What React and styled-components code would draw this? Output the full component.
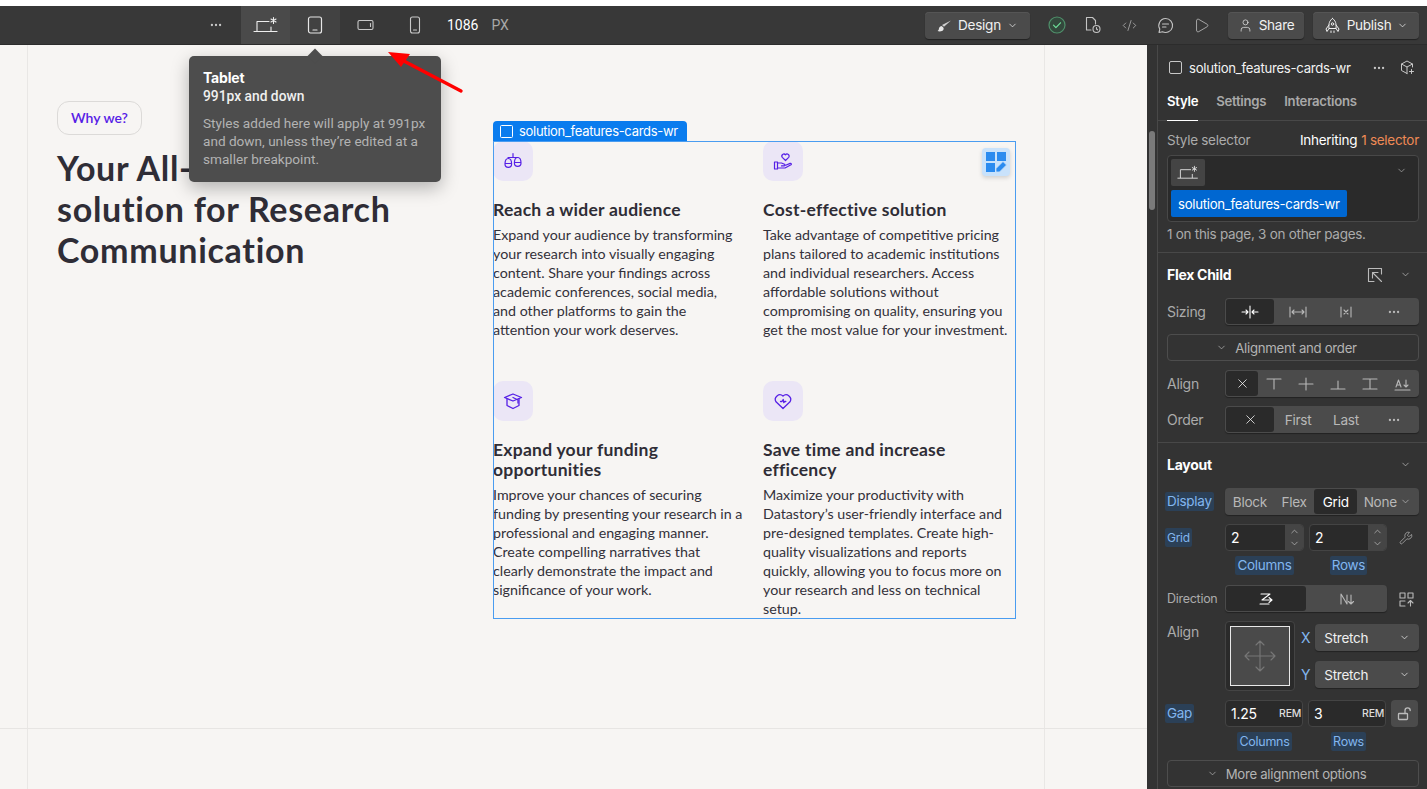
import React from 'react';
import styled, { createGlobalStyle } from 'styled-components';
import { ChevronDown, Ellipsis, Play, CodeXml, X, Wrench, User } from 'lucide-react';

const Global = createGlobalStyle`
  html, body { margin: 0; padding: 0; height: 100%; background: #fff; overflow: hidden; }
  #root { height: 100%; }
  * { box-sizing: border-box; }
`;

const Page = styled.div`
  width: 1427px; height: 789px; padding-top: 6px; display: flex; flex-direction: column;
  overflow: hidden; position: relative; background: #fff;
  font-family: Inter, "Liberation Sans", sans-serif; font-size: 13px; color: #fff;
`;
const Toolbar = styled.header`
  height: 39px; flex: none; display: flex; align-items: stretch; background: #383838;
  border-bottom: 1px solid #2c2c2c; padding-left: 190px; padding-right: 8px;
`;
const BreakTab = styled.div`
  width: ${p => p.$w || 50}px; display: flex; align-items: center; justify-content: center;
  background: ${p => p.$bg || 'transparent'}; color: ${p => p.$c || '#c9c9c9'};
`;
const WidthValue = styled.span`
  align-self: center; margin-left: 7px; font-size: 14px; color: #fff; font-family: Roboto, sans-serif;
`;
const WidthUnit = styled.span`
  align-self: center; margin-left: 13px; font-size: 14px; color: #a8a8a8; font-family: Roboto, sans-serif;
`;
const ToolActions = styled.div`
  margin-left: auto; display: flex; align-items: center; color: #c8c8c8;
`;
const ToolButton = styled.div`
  height: 27px; width: ${p => p.$w}px; margin-left: ${p => p.$ml || 0}px; display: flex; align-items: center;
  justify-content: center; gap: 6px; background: #4b4b4b; border-radius: 4px; color: #f0f0f0; font-size: 13.6px; letter-spacing: -.3px;
  box-shadow: 0 1px 1px #222, inset 0 1px 0 #555;
`;
const ToolIcon = styled.div`
  width: 36px; margin-left: ${p => p.$ml || 0}px; display: flex; justify-content: center; color: #c4c4c4;
`;
const Main = styled.main`
  flex: 1; display: flex; min-height: 0;
`;
const Canvas = styled.section`
  flex: 1; min-width: 0; background: #f7f5f3; position: relative; overflow: hidden;
`;
const Section = styled.div`
  height: ${p => p.$h}px; border-bottom: ${p => p.$last ? 'none' : '1px solid #e7e5e3'};
`;
const Container = styled.div`
  margin-left: 27px; width: 1018px; height: 100%; border-left: 1px solid #e9e7e5; border-right: 1px solid #e9e7e5;
  padding: 56px 0 0 29px; display: flex;
`;
const LeftCol = styled.div`
  width: 436px; flex: none;
`;
const Pill = styled.div`
  display: inline-flex; align-items: center; justify-content: center; width: 85px; height: 34px; padding-bottom: 2px;
  border: 1px solid #dcdad8; border-radius: 12px; color: #5620e6; font: 600 14px Lato, sans-serif;
`;
const Headline = styled.h1`
  margin: 12px 0 0; font: 700 34px/41px Lato, sans-serif; color: #2f2d36; letter-spacing: 0.7px;
`;
const CardsGrid = styled.div`
  position: relative; width: 523px; height: 478px; margin-top: 40px; display: grid;
  grid-template-columns: 252.5px 252.5px; column-gap: 17.5px; row-gap: 42px; align-content: start;
  &::after { content: ''; position: absolute; inset: 0; border: 1px solid #4a9cf0; pointer-events: none; }
`;
const SelectLabel = styled.div`
  position: absolute; left: 0; top: -20px; width: 194px; height: 20px; background: #0a7cee; color: #fff;
  border-radius: 4px 4px 0 0; display: flex; align-items: center; gap: 6px; padding-left: 7px;
  font-size: 13px; letter-spacing: -.3px; font-family: Inter, sans-serif;
`;
const LabelBox = styled.span`
  width: 13px; height: 13px; border: 1.3px solid #fff; border-radius: 1.5px; flex: none;
`;
const GridBadge = styled.div`
  position: absolute; left: 489px; top: 7px; width: 28px; height: 28px; border-radius: 4px; background: #c9e2fb;
  box-shadow: 0 2px 4px rgba(0,0,0,.15); display: flex; align-items: center; justify-content: center;
`;
const Card = styled.article`
  color: #2f2d36; font-family: Lato, sans-serif;
`;
const IconTile = styled.div`
  width: 40px; height: 40px; border-radius: 10px; background: #ebe6f6; color: #5620e6;
  display: flex; align-items: center; justify-content: center;
`;
const CardTitle = styled.h3`
  margin: 19px 0 5px; font: 700 17.5px/20px Lato, sans-serif; color: #2f2d36; white-space: nowrap; letter-spacing: .25px;
`;
const CardText = styled.p`
  margin: 0; font: 400 14.25px/19px Lato, sans-serif; color: #33313a; white-space: nowrap;
`;
const Tooltip = styled.div`
  position: absolute; left: 189px; top: 11px; width: 252px; height: 126px; background: #4d4d4d; border-radius: 5px;
  padding: 12px 14px; color: #fff; box-shadow: 0 6px 18px rgba(0,0,0,.28); font-family: Roboto, sans-serif; z-index: 5;
  &::before { content: ''; position: absolute; left: 119px; top: -7px; width: 14px; height: 14px; background: #4d4d4d; transform: rotate(45deg) scale(.75); }
`;
const TipTitle = styled.div`
  font: 700 14px/19px Inter, sans-serif; letter-spacing: -.2px;
`;
const TipSub = styled.div`
  font: 500 13.8px/19px Roboto, sans-serif; color: #f0f0f0;
`;
const TipBody = styled.div`
  margin-top: 8px; font: 400 13.6px/18px Roboto, sans-serif; color: #b3b3b3; white-space: nowrap;
`;
const RedArrow = styled.svg`
  position: absolute; left: 380px; top: 0; z-index: 6;
`;
const Panel = styled.aside`
  width: 280px; flex: none; background: #333; display: flex; color: #d8d8d8; letter-spacing: -.28px;
`;
const ScrollTrack = styled.div`
  width: 11px; flex: none; border-right: 1px solid #484848; padding: 86px 0 0 2px;
`;
const ScrollThumb = styled.div`
  width: 6px; height: 79px; border-radius: 3px; background: #7a7a7a;
`;
const PanelBody = styled.div`
  flex: 1; min-width: 0;
`;
const PanelHead = styled.div`
  height: 76px; border-bottom: 1px solid #484848; padding: 0 12px 0 9px; position: relative;
`;
const ElementRow = styled.div`
  height: 46px; display: flex; align-items: center; padding-bottom: 1px; color: #f2f2f2; font-size: 13.2px; gap: 7px; padding-left: 2px;
`;
const HeadIcons = styled.div`
  margin-left: auto; display: flex; align-items: center; gap: 14px; color: #c8c8c8;
`;
const OutlineBox = styled.span`
  width: 13px; height: 13px; border: 1.2px solid #c8c8c8; border-radius: 2px; flex: none;
`;
const Tabs = styled.div`
  display: flex; gap: 18px; height: 30px; align-items: flex-start; padding-top: 1px;
`;
const TabItem = styled.div`
  font-weight: 600; font-size: 13.2px; line-height: 18px; height: 29px; color: ${p => p.$on ? '#fff' : '#a9a9a9'};
  border-bottom: ${p => p.$on ? '1px solid #fff' : 'none'};
`;
const SelectorBlock = styled.div`
  height: 132px; padding: 10px 8px 0 9px; border-bottom: 1px solid #484848;
`;
const SelectorHead = styled.div`
  display: flex; justify-content: space-between; height: 24px; color: #ababab; line-height: 18px; gap: 4px; font-size: 13.5px;
`;
const InheritText = styled.span`
  color: #fff; margin-left: auto;
`;
const OrangeText = styled.span`
  color: #ef8a55;
`;
const SelectorBox = styled.div`
  height: 67px; background: #2a2a2a; border: 1px solid #484848; border-radius: 4px; padding: 3px; position: relative;
`;
const BreakChip = styled.div`
  width: 34px; height: 27px; background: #444; border-radius: 2px; display: flex; align-items: center; justify-content: center; color: #ddd;
`;
const ClassTag = styled.div`
  display: inline-flex; align-items: center; height: 27px; margin-top: 4px; padding: 0 7px; background: #0067d1; border-radius: 2px; color: #fff; font-size: 13.2px;
`;
const SelectorCaret = styled.span`
  position: absolute; right: 11px; top: 9px; color: #aaa; display: flex;
`;
const SelectorNote = styled.div`
  margin-top: 3px; color: #ababab; line-height: 18px; font-size: 13.5px;
`;
const Group = styled.div`
  height: ${p => p.$h}px; padding: 0 8px 0 9px; border-bottom: ${p => p.$end ? 'none' : '1px solid #484848'};
`;
const GroupTitle = styled.div`
  height: 45px; padding-bottom: 2px; display: flex; align-items: center; justify-content: space-between; font-weight: 700; font-size: 14px; color: #fff;
`;
const TitleIcons = styled.div`
  display: flex; align-items: center; gap: 17px; color: #bbb; padding-right: 8px;
`;
const Row = styled.div`
  display: grid; grid-template-columns: 58px 1fr; align-items: center; height: 27px; margin-bottom: ${p => p.$mb ?? 9}px;
`;
const RowLabel = styled.span`
  color: #ababab; font-size: ${p => p.$s || 14}px;
`;
const HiLabel = styled.span`
  justify-self: ${p => p.$center ? 'center' : 'start'}; background: #2b4057; color: #82b6ef; border-radius: 2px;
  padding: 2px 2px; margin-left: ${p => p.$center ? 0 : -2}px; line-height: 15px; font-size: ${p => p.$s || 13.5}px;
`;
const Segments = styled.div`
  height: 27px; display: flex; background: #4b4b4b; border-radius: 4px; padding: 1px; width: ${p => p.$w || 194}px; box-shadow: 0 1px 1px #222;
`;
const Seg = styled.div`
  flex: ${p => p.$f || 1}; display: flex; align-items: center; justify-content: center; border-radius: 3px; font-size: 13.6px;
  background: ${p => p.$on ? '#2a2a2a' : 'transparent'}; color: ${p => p.$on ? '#fff' : '#b8b8b8'};
`;
const WideButton = styled.div`
  height: 27px; border: 1px solid #4d4d4d; border-radius: 4px; display: flex; align-items: center; justify-content: center; gap: 8px;
  color: #b4b4b4; margin-bottom: 9px; font-size: 13.2px; padding-right: 13px;
`;
const FieldRow = styled.div`
  display: flex; align-items: center; gap: 5px;
`;
const Field = styled.div`
  height: 27px; width: ${p => p.$w || 79}px; background: #2a2a2a; border: 1px solid #444; border-radius: 4px; display: flex; align-items: center;
  padding-left: 5px; color: #fff; position: relative; font-size: 14px; overflow: hidden;
`;
const Stepper = styled.div`
  position: absolute; right: 0; top: 0; bottom: 0; width: 18px; background: #454545; display: flex; flex-direction: column; align-items: center; justify-content: space-around; color: #bbb;
`;
const Unit = styled.span`
  position: absolute; right: 1px; font-size: 10.5px; font-weight: 500; color: #ddd;
`;
const SideIcon = styled.span`
  width: 27px; height: 27px; display: flex; align-items: center; justify-content: center; color: #bbb;
  background: ${p => p.$bg || 'transparent'}; border-radius: 4px;
`;
const SubLabels = styled.div`
  display: grid; grid-template-columns: 79px 79px; column-gap: 5px; margin: 0 0 ${p => p.$mb}px 58px; height: 19px; align-items: center;
`;
const AlignRow = styled.div`
  display: grid; grid-template-columns: 58px 70px 1fr; height: 70px; margin-bottom: 9px;
`;
const AlignLabel = styled(RowLabel)`
  margin-top: 2px;
`;
const AlignBox = styled.div`
  width: 70px; height: 70px; background: #2a2a2a; border: 1px solid #444; border-radius: 4px; padding: 4px;
`;
const AlignInner = styled.div`
  width: 100%; height: 100%; background: #4a4a4a; border: 1.5px solid #e8e8e8; display: flex; align-items: center; justify-content: center; color: #777;
`;
const AlignSelects = styled.div`
  display: flex; flex-direction: column; gap: 10px; padding-top: 3px; padding-left: 6px;
`;
const SelectLine = styled.div`
  display: flex; align-items: center; gap: 5px; color: #82b6ef; font-size: 14px;
`;
const Select = styled.div`
  width: 104px; height: 27px; margin-left: auto; background: #4b4b4b; border-radius: 4px; display: flex; align-items: center; justify-content: space-between;
  padding: 0 9px; color: #f0f0f0; font-size: 13.5px; box-shadow: 0 1px 1px #222;
`;

const stroke = { fill: 'none', stroke: 'currentColor', strokeLinecap: 'round', strokeLinejoin: 'round' };
const Desk = ({ s = 1 }) => (
  <svg width={25 * s} height={18 * s} viewBox="0 0 25 18" {...stroke} strokeWidth="1.1">
    <path d="M4 15V5.5h12" /><path d="M18 15v-4" /><path d="M1 15.5h23" />
    <path d="M20.5 1.5v6M18 3l5 3M23 3l-5 3" />
  </svg>
);
const Tablet = () => (
  <svg width="16" height="18" viewBox="0 0 16 18" {...stroke} strokeWidth="1.2"><rect x="1.5" y="1" width="13" height="16" rx="2" /><path d="M6 14h4" /></svg>
);
const Land = () => (
  <svg width="17" height="12" viewBox="0 0 17 12" {...stroke} strokeWidth="1.1"><rect x="1" y="1.5" width="15" height="9" rx="1.5" /><path d="M13.5 4.5v3" /></svg>
);
const Phone = () => (
  <svg width="12" height="18" viewBox="0 0 12 18" {...stroke} strokeWidth="1.1"><rect x="1.5" y="1" width="9" height="16" rx="2" /><path d="M4.5 14h3" /></svg>
);
const Brush = () => (
  <svg width="15" height="15" viewBox="0 0 15 15"><path d="M14 1.5L7 7.8 5 6z" fill="#cfcfcf" transform="translate(0 1)" /><path d="M4.5 8c-2 .3-2.5 2-2.7 3.3-.2 1-.8 1.4-1.3 1.7 2 .8 5 .6 6-1.5.5-1-.1-2-.6-2.6z" fill="#e6e6e6" /></svg>
);
const Check = () => (
  <svg width="18" height="18" viewBox="0 0 18 18" {...stroke}><circle cx="9" cy="9" r="8" stroke="#4f8f6a" strokeWidth="1.2" fill="#33483c" /><path d="M5.5 9.2l2.4 2.4 4.6-4.8" stroke="#6fe09a" strokeWidth="1.2" /></svg>
);
const PageClock = () => (
  <svg width="18" height="18" viewBox="0 0 18 18" {...stroke} strokeWidth="1.1"><path d="M7 14H2.5V1.5h6l3 3V8" /><circle cx="12.5" cy="13" r="3.5" /><path d="M12.5 11.5V13l1 .8" /></svg>
);
const Comment = () => (
  <svg width="17" height="17" viewBox="0 0 17 17" {...stroke} strokeWidth="1.1"><path d="M8.5 1.5a7 7 0 1 1-3 13.3L2 15.5l.8-3.4a7 7 0 0 1 5.7-10.6z" /><path d="M5.5 7h6M5.5 10h3.5" /></svg>
);
const Rocket = () => (
  <svg width="17" height="17" viewBox="0 0 17 17" {...stroke} strokeWidth="1"><path d="M8.5 1.5c3 2 4 5 3.5 10H5c-.5-5 .5-8 3.5-10z" /><path d="M5 8l-3 4 1 2.5 2-3M12 8l3 4-1 2.5-2-3" /><circle cx="8.5" cy="7" r="1.2" /><path d="M7 14v1.5M10 14v1.5" /></svg>
);
const CubePlus = () => (
  <svg width="15" height="15" viewBox="0 0 15 15" {...stroke} strokeWidth="1"><path d="M7 13.5L1.5 10.5V4L7 1l5.5 3v3" /><path d="M1.5 4L7 7l5.5-3M7 7v6.5" /><path d="M11.5 9.5v4M9.5 11.5h4" /></svg>
);
const GridPencil = () => (
  <svg width="22" height="22" viewBox="0 0 22 22">
    <g fill="#2b8bef"><rect x="1" y="1" width="9" height="9" /><rect x="12" y="1" width="9" height="9" /><rect x="1" y="12" width="9" height="9" /></g>
    <path d="M11 21v-3.5L18 10.5l3.5 3.5-7 7z" fill="#2b8bef" stroke="#c9e2fb" strokeWidth=".8" />
  </svg>
);
const Scales = () => (
  <svg width="20" height="20" viewBox="0 0 20 20" {...stroke} strokeWidth="1.2">
    <path d="M10 2.5v3.5M5 6.5h10" />
    <path d="M5.3 7.5c-2 0-3.3 2.5-3.3 5.5a3.3 3.3 0 0 0 6.6 0c0-3-1.3-5.5-3.3-5.5zM2 12.5h6.6" />
    <path d="M14.7 6.5c-2 0-3.3 2.5-3.3 5.5a3.3 3.3 0 0 0 6.6 0c0-3-1.3-5.5-3.3-5.5zM11.4 11.5H18" />
  </svg>
);
const HeartHand = () => (
  <svg width="20" height="20" viewBox="0 0 20 20" {...stroke} strokeWidth="1.2">
    <path d="M12.5 9.5L9.3 6.3a2 2 0 0 1 3.2-2.5 2 2 0 0 1 3.2 2.5z" />
    <path d="M1.5 11h3v7h-3z" /><path d="M4.5 12h4l3 1.2c.9.5.5 1.8-.6 1.7H8.5" />
    <path d="M4.5 17h7.5l6-3.2c.8-.6.2-1.8-.9-1.4l-4.4 1.8" />
  </svg>
);
const Cap = () => (
  <svg width="20" height="20" viewBox="0 0 20 20" {...stroke} strokeWidth="1.3">
    <path d="M4 8v6.5l6 3 6-3V8" /><path d="M1.5 6.5L10 3l8.5 3.5L10 10z" /><path d="M10 6.5l5 2.5v3" />
  </svg>
);
const HeartSpark = () => (
  <svg width="20" height="20" viewBox="0 0 20 20" {...stroke} strokeWidth="1.3">
    <path d="M10 17.5L3 10.8A4.6 4.6 0 0 1 10 5a4.6 4.6 0 0 1 7 5.8z" />
    <path d="M7.5 10.5h1.5l1.2-2 .6 3 1-1h1" />
  </svg>
);
const PinArrow = () => (
  <svg width="16" height="16" viewBox="0 0 16 16" {...stroke} strokeWidth="1.1"><path d="M7 14.5H1.5v-13h13V7" /><path d="M14.5 14.5L5.5 5.5M5.5 11V5.5H11" /></svg>
);
const OpenLock = () => (
  <svg width="16" height="16" viewBox="0 0 16 16" {...stroke} strokeWidth="1.3"><rect x="1.5" y="7.5" width="9" height="6" rx=".8" /><path d="M8 7.5V4.5a2.6 2.6 0 0 1 5.2 0" /></svg>
);
const IconLine = ({ d, w = 18, h = 14, vb }) => (
  <svg width={w} height={h} viewBox={vb || `0 0 ${w} ${h}`} {...stroke} strokeWidth="1.1"><path d={d} /></svg>
);
const Caret = ({ up, s = 11, c }) => (
  <ChevronDown size={s} strokeWidth={1.6} color={c} style={up ? { transform: 'rotate(180deg)' } : undefined} />
);

const cards = [
  { icon: <Scales />, title: ['Reach a wider audience'], lines: ['Expand your audience by transforming', 'your research into visually engaging', 'content. Share your findings across', 'academic conferences, social media,', 'and other platforms to gain the', 'attention your work deserves.'] },
  { icon: <HeartHand />, title: ['Cost-effective solution'], lines: ['Take advantage of competitive pricing', 'plans tailored to academic institutions', 'and individual researchers. Access', 'affordable solutions without', 'compromising on quality, ensuring you', 'get the most value for your investment.'] },
  { icon: <Cap />, title: ['Expand your funding', 'opportunities'], lines: ['Improve your chances of securing', 'funding by presenting your research in a', 'professional and engaging manner.', 'Create compelling narratives that', 'clearly demonstrate the impact and', 'significance of your work.'] },
  { icon: <HeartSpark />, title: ['Save time and increase', 'efficency'], lines: ['Maximize your productivity with', 'Datastory’s user-friendly interface and', 'pre-designed templates. Create high-', 'quality visualizations and reports', 'quickly, allowing you to focus more on', 'your research and less on technical', 'setup.'] },
];
const withBreaks = arr => arr.map((l, i) => <React.Fragment key={i}>{l}{i < arr.length - 1 && <br />}</React.Fragment>);

export default function App() {
  return (
    <Page>
      <Global />
      <Toolbar>
        <BreakTab $w={51}><Ellipsis size={14} /></BreakTab>
        <BreakTab $w={49} $bg="#4a4a4a" $c="#eee"><Desk /></BreakTab>
        <BreakTab $bg="#424242" $c="#e6e6e6"><Tablet /></BreakTab>
        <BreakTab><Land /></BreakTab>
        <BreakTab><Phone /></BreakTab>
        <WidthValue>1086</WidthValue>
        <WidthUnit>PX</WidthUnit>
        <ToolActions>
          <ToolButton $w={105}><Brush />Design<Caret /></ToolButton>
          <ToolIcon $ml={9}><Check /></ToolIcon>
          <ToolIcon><PageClock /></ToolIcon>
          <ToolIcon><CodeXml size={15} strokeWidth={1.1} /></ToolIcon>
          <ToolIcon><Comment /></ToolIcon>
          <ToolIcon><Play size={17} strokeWidth={1.1} /></ToolIcon>
          <ToolButton $w={76} $ml={9}><User size={15} strokeWidth={1.1} />Share</ToolButton>
          <ToolButton $w={106} $ml={9}><Rocket />Publish<Caret /></ToolButton>
        </ToolActions>
      </Toolbar>
      <Main>
        <Canvas>
          <Section $h={684}>
            <Container>
              <LeftCol>
                <Pill>Why we?</Pill>
                <Headline>Your All-in-One<br />solution for Research<br />Communication</Headline>
              </LeftCol>
              <CardsGrid>
                <SelectLabel><LabelBox />solution_features-cards-wr</SelectLabel>
                <GridBadge><GridPencil /></GridBadge>
                {cards.map((c, i) => (
                  <Card key={i}>
                    <IconTile>{c.icon}</IconTile>
                    <CardTitle>{withBreaks(c.title)}</CardTitle>
                    <CardText>{withBreaks(c.lines)}</CardText>
                  </Card>
                ))}
              </CardsGrid>
            </Container>
          </Section>
          <Section $h={61} $last><Container /></Section>
          <Tooltip>
            <TipTitle>Tablet</TipTitle>
            <TipSub>991px and down</TipSub>
            <TipBody>Styles added here will apply at 991px<br />and down, unless they’re edited at a<br />smaller breakpoint.</TipBody>
          </Tooltip>
          <RedArrow width="90" height="55" viewBox="0 0 90 55">
            <path d="M81 46L20 14" stroke="#f00" strokeWidth="3.4" strokeLinecap="round" />
            <path d="M8 7l22 2-9 13z" fill="#f00" />
          </RedArrow>
        </Canvas>
        <Panel>
          <ScrollTrack><ScrollThumb /></ScrollTrack>
          <PanelBody>
            <PanelHead>
              <ElementRow>
                <OutlineBox />solution_features-cards-wr
                <HeadIcons><Ellipsis size={14} /><CubePlus /></HeadIcons>
              </ElementRow>
              <Tabs>
                <TabItem $on>Style</TabItem>
                <TabItem>Settings</TabItem>
                <TabItem>Interactions</TabItem>
              </Tabs>
            </PanelHead>
            <SelectorBlock>
              <SelectorHead>
                <span>Style selector</span>
                <InheritText>Inheriting</InheritText>
                <OrangeText>1 selector</OrangeText>
              </SelectorHead>
              <SelectorBox>
                <BreakChip><Desk s={0.85} /></BreakChip>
                <ClassTag>solution_features-cards-wr</ClassTag>
                <SelectorCaret><Caret /></SelectorCaret>
              </SelectorBox>
              <SelectorNote>1 on this page, 3 on other pages.</SelectorNote>
            </SelectorBlock>
            <Group $h={190}>
              <GroupTitle><span>Flex Child</span><TitleIcons><PinArrow /><Caret /></TitleIcons></GroupTitle>
              <Row>
                <RowLabel>Sizing</RowLabel>
                <Segments>
                  <Seg $on><IconLine d="M1 7h6M5 5l2 2-2 2M9 1v12M17 7h-6M13 5l-2 2 2 2" /></Seg>
                  <Seg><IconLine d="M1 2v10M17 2v10M3 7h12M5 5L3 7l2 2M13 5l2 2-2 2" /></Seg>
                  <Seg><IconLine d="M4 2v10M14 2v10M7 5l4 4M11 5l-4 4" /></Seg>
                  <Seg><Ellipsis size={14} /></Seg>
                </Segments>
              </Row>
              <WideButton><Caret />Alignment and order</WideButton>
              <Row>
                <RowLabel>Align</RowLabel>
                <Segments>
                  <Seg $on><X size={15} strokeWidth={1.2} /></Seg>
                  <Seg><IconLine d="M2 2h14M9 2v10" /></Seg>
                  <Seg><IconLine d="M2 7h14M9 1v12" /></Seg>
                  <Seg><IconLine d="M2 12h14M9 4v8" /></Seg>
                  <Seg><IconLine d="M2 2h14M2 12h14M9 2v10" /></Seg>
                  <Seg><IconLine d="M2 13h15M3 10l2.5-7L8 10M3.8 8h3.4M13 3v7M11 8l2 2 2-2" /></Seg>
                </Segments>
              </Row>
              <Row>
                <RowLabel>Order</RowLabel>
                <Segments>
                  <Seg $on><X size={15} strokeWidth={1.2} /></Seg>
                  <Seg>First</Seg>
                  <Seg>Last</Seg>
                  <Seg><Ellipsis size={14} /></Seg>
                </Segments>
              </Row>
            </Group>
            <Group $h={346} $end>
              <GroupTitle><span>Layout</span><TitleIcons><Caret /></TitleIcons></GroupTitle>
              <Row>
                <HiLabel>Display</HiLabel>
                <Segments>
                  <Seg $f={47}>Block</Seg>
                  <Seg $f={40}>Flex</Seg>
                  <Seg $f={42} $on>Grid</Seg>
                  <Seg $f={60}>None&nbsp;<Caret /></Seg>
                </Segments>
              </Row>
              <Row $mb={5}>
                <HiLabel $s={12}>Grid</HiLabel>
                <FieldRow>
                  <Field>2<Stepper><Caret up /><Caret /></Stepper></Field>
                  <Field $w={78}>2<Stepper><Caret up /><Caret /></Stepper></Field>
                  <SideIcon><Wrench size={14} strokeWidth={1.2} /></SideIcon>
                </FieldRow>
              </Row>
              <SubLabels $mb={10}>
                <HiLabel $center>Columns</HiLabel>
                <HiLabel $center>Rows</HiLabel>
              </SubLabels>
              <Row>
                <RowLabel $s={12.5}>Direction</RowLabel>
                <FieldRow>
                  <Segments $w={162}>
                    <Seg $on><IconLine d="M4 2h9L5 8h10M12 5.5L15 8l-3 2.5M3 12h9" /></Seg>
                    <Seg><IconLine d="M4 12V2l6 10V3M14 3v9M11.5 9.5L14 12l2.5-2.5" /></Seg>
                  </Segments>
                  <SideIcon><IconLine w={16} h={16} d="M2 2h5v5H2zM10 2h5v5h-5zM2 10h5M2 10v5h5M12.5 15v-5M10 12l2.5-2.5L15 12" /></SideIcon>
                </FieldRow>
              </Row>
              <AlignRow>
                <AlignLabel>Align</AlignLabel>
                <AlignBox>
                  <AlignInner><IconLine w={34} h={34} d="M17 2v30M2 17h30M13 6l4-4 4 4M13 28l4 4 4-4M6 13l-4 4 4 4M28 13l4 4-4 4" /></AlignInner>
                </AlignBox>
                <AlignSelects>
                  <SelectLine>X<Select>Stretch<Caret /></Select></SelectLine>
                  <SelectLine>Y<Select>Stretch<Caret /></Select></SelectLine>
                </AlignSelects>
              </AlignRow>
              <Row $mb={5}>
                <HiLabel>Gap</HiLabel>
                <FieldRow>
                  <Field $w={78}>1.25<Unit>REM</Unit></Field>
                  <Field $w={78}>3<Unit>REM</Unit></Field>
                  <SideIcon $bg="#4b4b4b"><OpenLock /></SideIcon>
                </FieldRow>
              </Row>
              <SubLabels $mb={9}>
                <HiLabel $center $s={12.5}>Columns</HiLabel>
                <HiLabel $center $s={12.5}>Rows</HiLabel>
              </SubLabels>
              <WideButton><Caret />More alignment options</WideButton>
            </Group>
          </PanelBody>
        </Panel>
      </Main>
    </Page>
  );
}
